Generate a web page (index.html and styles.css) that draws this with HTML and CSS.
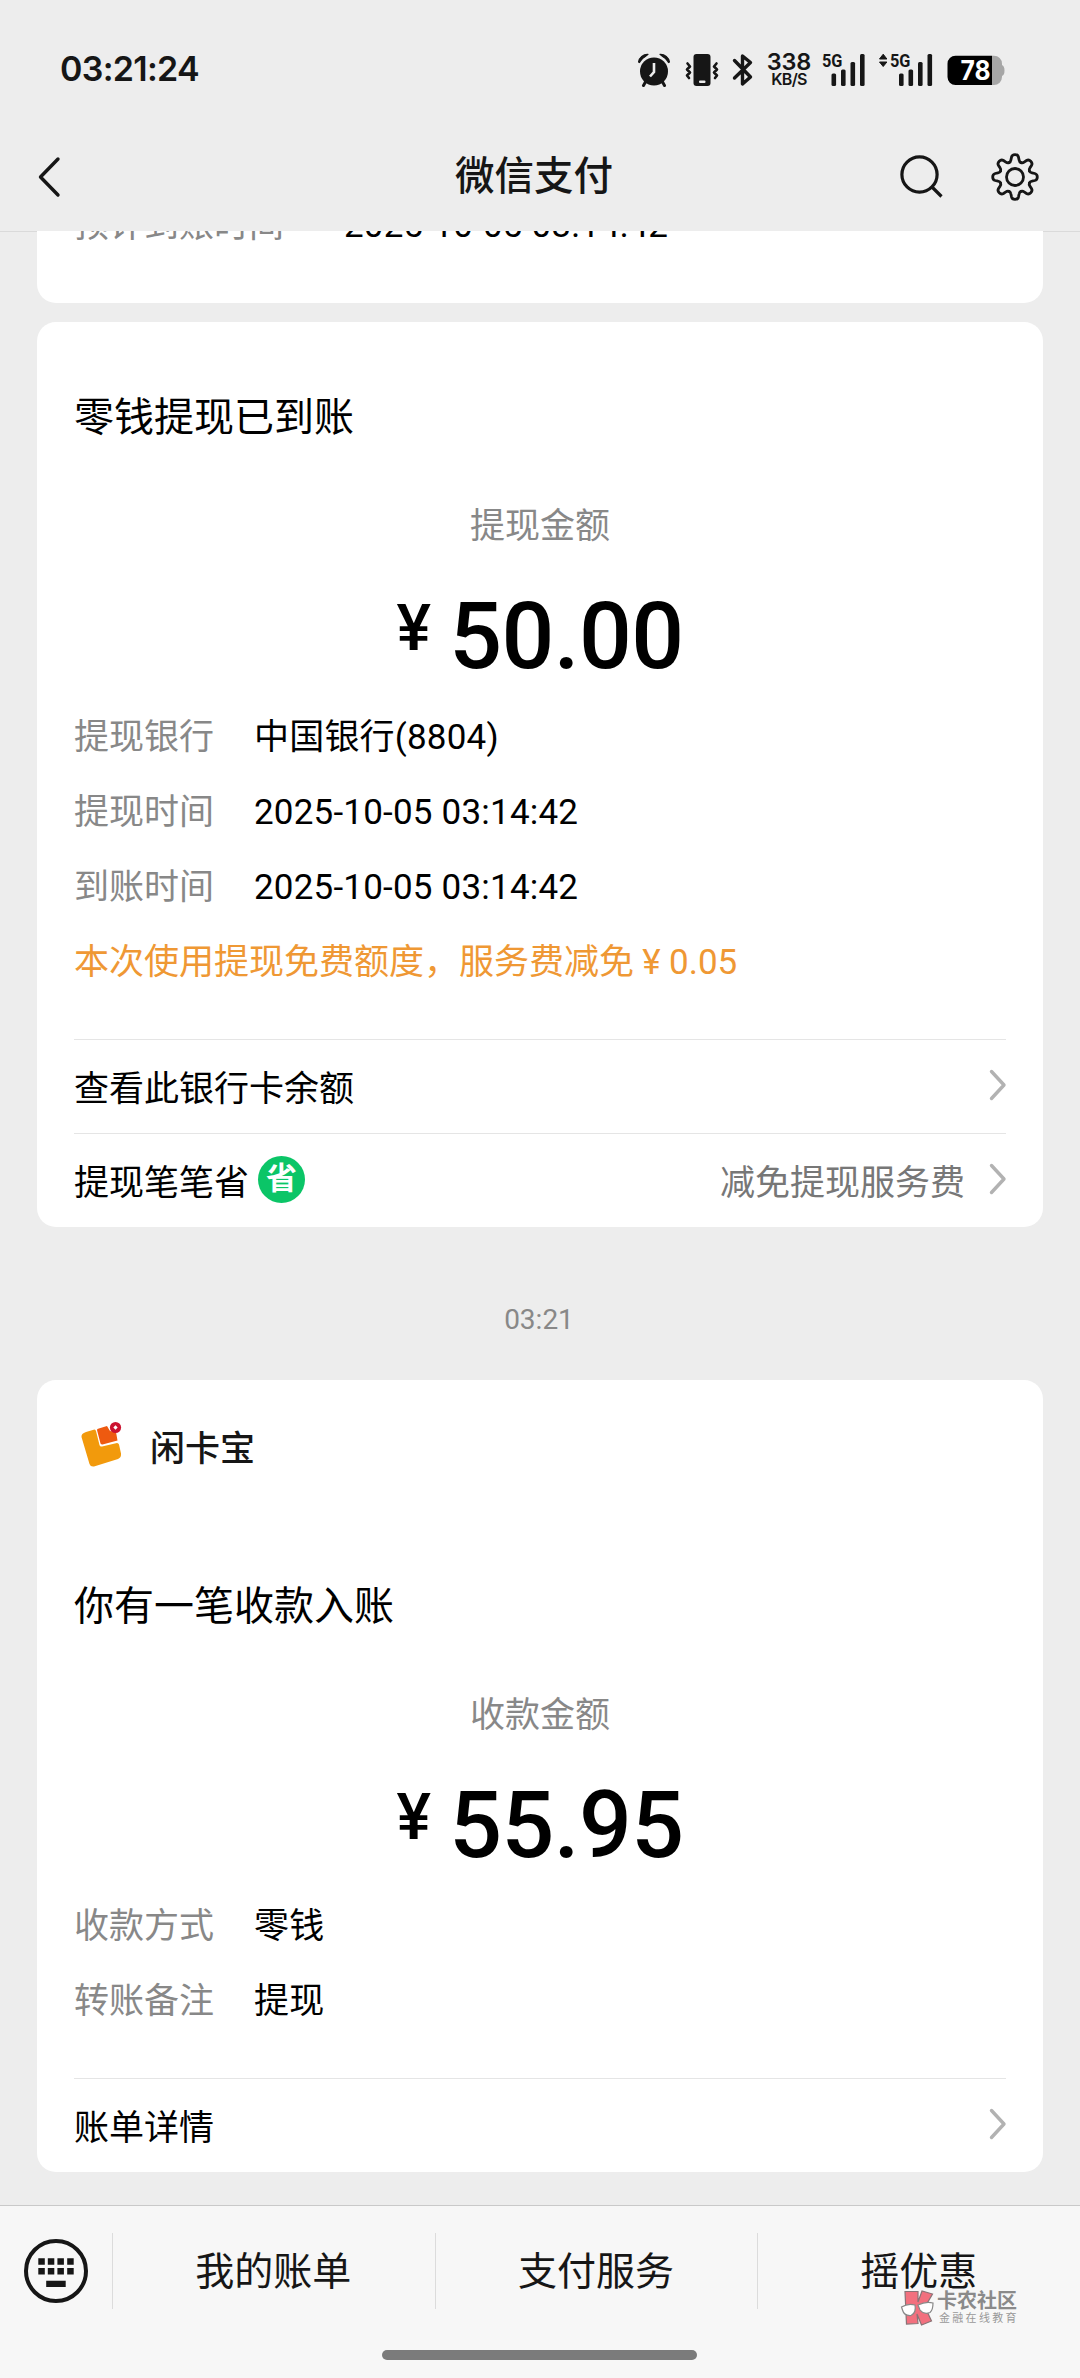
FILE: index.html
```html
<!DOCTYPE html>
<html lang="zh-CN">
<head>
<meta charset="utf-8">
<title>微信支付</title>
<link rel="stylesheet" href="styles.css">
</head>
<body>
<svg class="defs" width="0" height="0">
  <symbol id="chevron" viewBox="0 0 18 32"><path d="M2.5 2.5L15 16L2.5 29.5" fill="none" stroke="#b2b2b2" stroke-width="3.4" stroke-linecap="round" stroke-linejoin="round"/></symbol>
  <path id="tooth" d="M-5.97-14.41Q-4.4-15.06-4.1-17L-3.5-19.8Q-2.9-22.3 0-22.3Q2.9-22.3 3.5-19.8L4.1-17Q4.4-15.06 5.97-14.41"/>
</svg>

<header class="top">
  <div class="status">
    <span class="clock">03:21:24</span>
    <div class="status-icons">
      <svg class="alarm" width="34" height="36" viewBox="0 0 34 36">
        <g fill="#161616"><circle cx="17" cy="20.5" r="14"/><path d="M1.5 11A9 9 0 0 1 11 3.4Q8 6 5.500 7.500Q3.500 9.500 2.500 11.500Z M32.500 11A9 9 0 0 0 23 3.400Q26 6 28.500 7.500Q30.500 9.500 31.500 11.500Z" stroke="#161616" stroke-width="1.200" stroke-linejoin="round"/></g>
        <path d="M9 30L6.500 34.500M25 30L27.500 34.500" stroke="#161616" stroke-width="3" stroke-linecap="round"/>
        <path d="M17 12V21L13 25.500" fill="none" stroke="#ededed" stroke-width="2.600"/>
      </svg>
      <svg class="vibrate" width="34" height="36" viewBox="0 0 34 36">
        <rect x="8.500" y="3" width="17" height="32" rx="3" fill="#161616"/><rect x="14" y="29.500" width="6.500" height="2.400" rx="1" fill="#ededed"/>
        <path d="M2.500 12.500L5 15.500L2 18.500L5 21.500L2 24.500L4 27M31.500 12.500L29 15.500L32 18.500L29 21.500L32 24.500L30 27" fill="none" stroke="#161616" stroke-width="2.600" stroke-linejoin="round" stroke-linecap="round"/>
      </svg>
      <svg class="bluetooth" width="22" height="36" viewBox="0 0 22 36"><path d="M2.500 9.500L18.500 26L10.500 33V5L18.500 11.500L2.500 27" fill="none" stroke="#161616" stroke-width="3.400" stroke-linejoin="round" stroke-linecap="round"/></svg>
      <div class="speed"><b>338</b><span>KB/S</span></div>
      <svg class="signal" width="44" height="36" viewBox="0 0 44 36">
        <text x="0" y="16" class="net" textLength="20.5" lengthAdjust="spacingAndGlyphs">5G</text>
        <g fill="#161616"><rect x="9.500" y="22.500" width="4.600" height="12.500" rx="1.500"/><rect x="19" y="18.500" width="4.600" height="16.500" rx="1.500"/><rect x="28.500" y="11" width="4.600" height="24" rx="1.500"/><rect x="38" y="3" width="4.600" height="32" rx="1.500"/></g>
      </svg>
      <svg class="signal-alt" width="56" height="36" viewBox="0 0 56 36">
        <path d="M2.500 8L6.200 3.200L9.900 8ZM2.500 11L6.200 15.500L9.900 11Z" fill="#161616" stroke="#161616" stroke-linejoin="round"/>
        <text x="13" y="16" class="net" textLength="20.5" lengthAdjust="spacingAndGlyphs">5G</text>
        <g fill="#161616"><rect x="22" y="22.500" width="4.600" height="12.500" rx="1.500"/><rect x="31.500" y="18.500" width="4.600" height="16.500" rx="1.500"/><rect x="41" y="11" width="4.600" height="24" rx="1.500"/><rect x="50.500" y="3" width="4.600" height="32" rx="1.500"/></g>
      </svg>
      <svg class="battery" width="58" height="36" viewBox="0 0 58 36">
        <path d="M45 4.700H47A8 8 0 0 1 55 12.700V26A8 8 0 0 1 47 34H45ZM54 14H55Q57.500 15 57.500 19.500T55 25H54Z" fill="#a6a6a6"/>
        <path d="M45 4.700V34H8.500A8 8 0 0 1 .500 26V12.700A8 8 0 0 1 8.500 4.700Z" fill="#000"/>
        <text x="13.500" y="29" class="charge" textLength="30" lengthAdjust="spacingAndGlyphs">78</text>
      </svg>
    </div>
  </div>
  <nav class="nav">
    <svg class="back" width="26" height="44" viewBox="0 0 26 44"><path d="M22 4L4.500 22L22 40" fill="none" stroke="#161616" stroke-width="3.400" stroke-linecap="round" stroke-linejoin="round"/></svg>
    <h1>微信支付</h1>
    <div class="nav-actions">
      <svg width="46" height="46" viewBox="0 0 46 46"><g fill="none" stroke="#161616" stroke-width="3.200"><ellipse cx="21.500" cy="20.500" rx="17.600" ry="17.600"/><path d="M34 33L43.500 42.500"/></g></svg>
      <svg width="50" height="50" viewBox="-25 -25 50 50"><g fill="none" stroke="#161616" stroke-width="2.800" stroke-linecap="round">
        <use href="#tooth"/><use href="#tooth" transform="rotate(45)"/><use href="#tooth" transform="rotate(90)"/><use href="#tooth" transform="rotate(135)"/><use href="#tooth" transform="rotate(180)"/><use href="#tooth" transform="rotate(225)"/><use href="#tooth" transform="rotate(270)"/><use href="#tooth" transform="rotate(315)"/>
        <circle r="8.500"/></g></svg>
    </div>
  </nav>
</header>

<main class="chat">
  <section class="card card-cut">
    <dl class="facts wide"><dt>预计到账时间</dt><dd>2025-10-05 03:14:42</dd></dl>
  </section>

  <section class="card card-out">
    <h2>零钱提现已到账</h2>
    <p class="caption">提现金额</p>
    <p class="amount"><span class="yen">¥</span><span>50.00</span></p>
    <dl class="facts">
      <dt>提现银行</dt><dd>中国银行(8804)</dd>
      <dt>提现时间</dt><dd>2025-10-05 03:14:42</dd>
      <dt>到账时间</dt><dd>2025-10-05 03:14:42</dd>
    </dl>
    <p class="notice">本次使用提现免费额度，服务费减免<span class="fee">¥</span>0.05</p>
    <div class="link"><span>查看此银行卡余额</span><svg class="go"><use href="#chevron"/></svg></div>
    <div class="link"><span>提现笔笔省</span>
      <span class="save">省</span>
      <span class="hint">减免提现服务费</span><svg class="go"><use href="#chevron"/></svg></div>
  </section>

  <time class="stamp">03:21</time>

  <section class="card card-in">
    <div class="merchant">
      <svg width="44" height="48" viewBox="0 0 44 48">
        <path d="M6 11L14.500 8.500Q15.500 8.500 16 10L19.500 24Q20 26 22 25.500L37 22Q38.500 22 39 23.500L41 32.500Q41.500 36.500 38 38L14 45.500Q10.500 46 9.500 43L1.500 16Q1 12.500 6 11Z" fill="#f29a0c"/>
        <path d="M17 9Q17 8 18 7.700L27 5L30 10L36 11L37.500 19.500L22.500 23.500Q21 23.500 20.500 22.500Z" fill="#ee5a10"/>
        <circle cx="35.500" cy="6.500" r="5.600" fill="#cb1230"/><path d="M35.500 4.300L37.700 6.500L35.500 8.700L33.300 6.500Z" fill="#fff"/>
      </svg>
      <span>闲卡宝</span>
    </div>
    <h2>你有一笔收款入账</h2>
    <p class="caption">收款金额</p>
    <p class="amount"><span class="yen">¥</span><span>55.95</span></p>
    <dl class="facts">
      <dt>收款方式</dt><dd>零钱</dd>
      <dt>转账备注</dt><dd>提现</dd>
    </dl>
    <div class="link"><span>账单详情</span><svg class="go"><use href="#chevron"/></svg></div>
  </section>
</main>

<footer class="bar">
  <div class="menu">
    <div class="keyboard"><svg width="66" height="66" viewBox="0 0 66 66"><circle cx="33" cy="33" r="30" fill="none" stroke="#161616" stroke-width="4"/>
      <path d="M15.300 20.200h6.500v6.500h-6.500zM24.800 20.200h6.500v6.500h-6.500zM34.400 20.200h6.500v6.500h-6.500zM44.200 20.200h6.500v6.500h-6.500zM15.300 30h6.500v6.500h-6.500zM24.800 30h6.500v6.500h-6.500zM34.400 30h6.500v6.500h-6.500zM44.200 30h6.500v6.500h-6.500zM23.200 42.700h19.500v6.300h-19.500z" fill="#161616"/></svg></div>
    <div class="item">我的账单</div>
    <div class="item">支付服务</div>
    <div class="item">摇优惠</div>
  </div>
  <div class="home"></div>
</footer>

<div class="watermark">
  <svg width="34" height="36" viewBox="0 0 34 36">
    <g fill="#f2707e" stroke="#8a7376" stroke-width="1.200"><path d="M5 1.500H18V12L22 1L32.500 4L25 17L31.500 31L21.500 35L17 24L18 33.500L6.500 34Z"/></g>
    <g fill="#fff" stroke="#888" stroke-width="1.200"><path d="M1.500 17Q8 13 15 15Q16.500 23 11 25.500Q4 26 2.500 20Z"/><path d="M18 15Q26 11 33 13Q33 20 30 22.500Q24 25 20 20Z"/></g>
  </svg>
  <div><strong>卡农社区</strong><small>金融在线教育</small></div>
</div>
</body>
</html>
```
FILE: styles.css
```css
* { box-sizing: border-box; margin: 0; padding: 0; }
body {
  width: 1080px;
  height: 2378px;
  position: relative;
  display: flex;
  flex-direction: column;
  overflow: hidden;
  background: #ededed;
  color: #000;
  font-family: Roboto, "Noto Sans CJK SC", sans-serif;
  font-size: 35px;
}
svg { display: block; flex: none; }
.defs { position: absolute; }

/* status bar and title */
.top { height: 231px; flex: none; color: #161616; }
.status { height: 120px; display: flex; justify-content: space-between; padding: 51px 75px 0 60px; }
.clock { font: 600 34px/36px Inter, sans-serif; letter-spacing: -0.7px; }
.status-icons { display: flex; }
.vibrate { margin-left: 14.500px; }
.bluetooth { margin-left: 13px; }
.speed { margin-left: 13px; width: 44px; display: flex; flex-direction: column; align-items: center; font-family: Inter, sans-serif; }
.speed b { font-size: 23.500px; font-weight: 600; line-height: 21px; letter-spacing: -0.2px; }
.speed span { font-size: 16px; font-weight: 600; line-height: 15px; letter-spacing: -0.7px; }
.signal { margin-left: 11px; }
.signal-alt { margin-left: 11px; }
.battery { margin-left: 14px; }
.net { font: 700 18px Roboto, sans-serif; fill: #161616; }
.charge { font: 700 27px Inter, sans-serif; fill: #fff; }
.nav { height: 111px; display: grid; grid-template-columns: 196px 1fr 204px; align-items: center; padding: 2px 40px 0 36px; }
.nav h1 { font-size: 39.500px; font-weight: 500; text-align: center; line-height: 50px; }
.nav-actions { display: flex; justify-content: flex-end; align-items: center; gap: 46px; }

/* messages */
.chat { flex: 1; overflow: hidden; box-shadow: inset 0 1px #dadada; }
.card { width: 1006px; margin: 0 auto; padding: 0 37px; border-radius: 19px; background: #fff; }
.card-cut { height: 148px; margin-top: -76px; padding-top: 33px; }
.card-out { height: 905px; margin-top: 19px; padding-top: 66px; }
.card-in { height: 792px; }
.card h2 { font-size: 40px; font-weight: 400; line-height: 60px; }
.caption { margin-top: 53px; line-height: 52px; text-align: center; color: #888; }
.amount { height: 93px; margin-top: 37px; display: flex; justify-content: center; align-items: flex-start; font-weight: 500; font-size: 93px; line-height: 93px; letter-spacing: -0.6px; }
.yen { font-size: 65px; line-height: 76px; margin-right: 19px; }
.facts { display: grid; grid-template-columns: 180px 1fr; grid-auto-rows: 75px; line-height: 75px; margin-top: 17px; }
.facts.wide { grid-template-columns: 270px 1fr; margin-top: 0; }
.facts dt { color: #888; }
.facts dd { letter-spacing: 0.2px; }
.notice { line-height: 75px; color: #ef9834; white-space: nowrap; }
.fee { display: inline-block; width: 35px; text-align: center; }
.link { height: 94px; padding-bottom: 3px; display: flex; align-items: center; border-top: 1px solid #e5e5e5; }
.notice + .link { margin-top: 39px; }
.facts + .link { margin-top: 39px; }
.go { width: 18px; height: 32px; margin-left: auto; position: relative; left: 1px; }
.save { width: 47px; height: 47px; margin-left: 9px; border-radius: 50%; background: #0bc567; color: #fff; font-size: 31px; font-weight: 700; line-height: 45px; text-align: center; }
.hint { margin-left: auto; color: #777; }
.hint + .go { margin-left: 23px; }
.stamp { display: block; height: 153px; padding-right: 2px; text-align: center; font-size: 28px; line-height: 186px; color: #888; }
.merchant { height: 132px; padding: 0 0 2px 6px; display: flex; align-items: center; gap: 26px; font-weight: 500; color: #161616; }
.card-in h2 { margin-top: 65px; }

/* bottom menu */
.bar { height: 173px; flex: none; border-top: 1px solid #c9c9c9; background: #f7f7f7; }
.menu { display: flex; height: 76px; margin-top: 27px; line-height: 79px; font-size: 39px; color: #161616; }
.keyboard { width: 112px; display: flex; align-items: center; padding-left: 23px; }
.item { flex: 1; border-left: 1px solid #dcdcdc; padding-right: 1px; text-align: center; }
.home { width: 315px; height: 10px; margin: 41px 0 0 382px; border-radius: 5px; background: #7b7b7b; }

.watermark { position: absolute; left: 900px; top: 2290px; display: flex; gap: 3px; }
.watermark strong { display: block; font-size: 20px; line-height: 22px; color: #8a8a8a; font-weight: 700; white-space: nowrap; }
.watermark small { display: block; margin-left: 2px; font-size: 11px; line-height: 13px; letter-spacing: 2.300px; color: #999; white-space: nowrap; }
```
